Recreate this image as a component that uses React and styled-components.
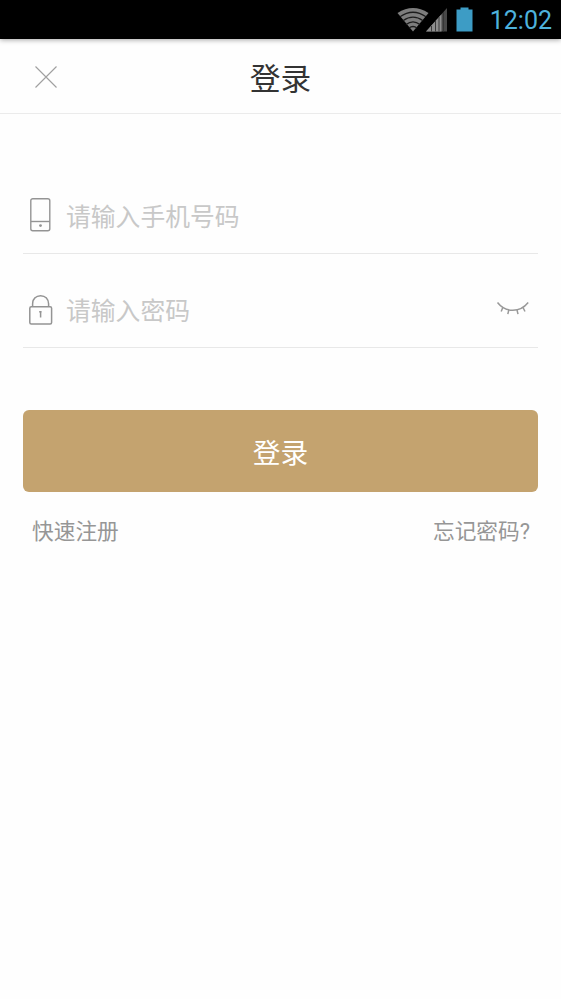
import React from "react";
import styled, { createGlobalStyle } from "styled-components";

const App = () => {
  return (
    <Page>
      <GlobalStyle />
      <StatusBar>
        <WifiIcon />
        <SignalIcon />
        <BatteryIcon />
        <Clock>12:02</Clock>
      </StatusBar>

      <Header>
        <CloseButton aria-label="关闭">
          <CloseIcon />
        </CloseButton>
        <Title>登录</Title>
      </Header>

      <Form onSubmit={(e) => e.preventDefault()}>
        <Field>
          <PhoneIcon />
          <Input type="tel" placeholder="请输入手机号码" />
        </Field>
        <Field>
          <LockIcon />
          <Input type="password" placeholder="请输入密码" />
          <EyeIcon />
        </Field>
        <Submit type="submit">登录</Submit>
        <Links>
          <TextLink>快速注册</TextLink>
          <TextLink>忘记密码?</TextLink>
        </Links>
      </Form>
    </Page>
  );
};

const WifiIcon = () => (
  <svg width="32" height="25" viewBox="0 0 32 25">
    <path d="M16 24.5 L0.5 6 Q16 -4 31.5 6 Z" fill="#7d7d7d" />
    <g fill="none" stroke="#1c1c1c" strokeWidth="1.3">
      <path d="M3 9.8 Q16 0.7 29 9.8" />
      <path d="M6 13.7 Q16 6.5 26 13.7" />
      <path d="M9 17.5 Q16 12.1 23 17.5" />
      <path d="M12 21.1 Q16 17.9 20 21.1" />
    </g>
  </svg>
);

const SignalIcon = () => (
  <Signal width="22" height="25" viewBox="0 0 22 25">
    <path d="M0 24.5 L21 1 V24.5 Z" fill="#484848" />
    <path d="M0 24.5 L15.5 7.2 V24.5 Z" fill="#8e8e8e" />
    <path d="M5.5 19V24.5M9.5 14V24.5M13 10V24.5M17.5 5V24.5" stroke="#333" strokeWidth="0.9" />
  </Signal>
);

const BatteryIcon = () => (
  <Battery width="17" height="25" viewBox="0 0 17 25">
    <path d="M0.5 2.5H4.5V0.5H12.5V2.5H16.5V24.5H0.5Z" fill="#3d9cc5" />
  </Battery>
);

const CloseIcon = () => (
  <svg width="22" height="22" viewBox="0 0 22 22">
    <path d="M0.5 0.5L21.5 21.5M21.5 0.5L0.5 21.5" stroke="#a0a0a0" strokeWidth="1.1" />
  </svg>
);

const PhoneIcon = () => (
  <svg width="24" height="36" viewBox="0 0 24 36" fill="none" stroke="#949494" strokeWidth="1.4">
    <rect x="1.8" y="1.7" width="19" height="32" rx="2" />
    <path d="M2 24.5H21" />
    <circle cx="11.5" cy="28.6" r="1.4" fill="#949494" stroke="none" />
  </svg>
);

const LockIcon = () => (
  <svg width="24" height="36" viewBox="0 0 24 36" fill="none" stroke="#949494" strokeWidth="1.5">
    <rect x="0.8" y="15.7" width="21.8" height="17.4" rx="1.5" />
    <path d="M3.6 15.3V12.8C3.6 8.2 6.8 4.7 11.6 4.7S19.6 8.2 19.6 12.8V15.3" />
    <path d="M11.6 20V26.5" />
    <path d="M10.2 20.8H12.4" />
  </svg>
);

const EyeIcon = () => (
  <Eye width="34" height="16" viewBox="0 0 34 16" fill="none" stroke="#999" strokeWidth="1.5">
    <path d="M1.5 2.5C9.5 12.8 24 12.8 32.2 2.5" />
    <path d="M6.8 7.5L5.2 11.5M12.8 10L11.8 14.2M21 10L22 14.2M27 7.5L29 11.5" />
  </Eye>
);

const GlobalStyle = createGlobalStyle`
  * {
    box-sizing: border-box;
  }

  body {
    margin: 0;
    background: #fefefe;
    font-family: Roboto, "Noto Sans CJK SC", sans-serif;
  }

  button {
    padding: 0;
    border: none;
    background: transparent;
    font-family: inherit;
    cursor: pointer;
  }
`;

const Page = styled.div`
  height: 999px;
  overflow: hidden;
`;

const StatusBar = styled.div`
  display: flex;
  align-items: center;
  justify-content: flex-end;
  height: 39px;
  padding-right: 9px;
  background: #000;
  box-shadow: 0 1px 5px rgba(0, 0, 0, 0.35);
`;

const Signal = styled.svg`
  margin-left: -3px;
`;

const Battery = styled.svg`
  margin-left: 8px;
`;

const Clock = styled.span`
  width: 63px;
  margin-left: 16px;
  padding-top: 2px;
  color: #4eb2dc;
  font-size: 25px;
  line-height: 30px;
  text-align: right;
  white-space: nowrap;
`;

const Header = styled.header`
  display: grid;
  grid-template-columns: 91px 1fr 91px;
  align-items: center;
  height: 75px;
  padding-top: 2px;
  border-bottom: 1px solid #ebebeb;
`;

const CloseButton = styled.button`
  height: 22px;
  line-height: 0;
`;

const Title = styled.h1`
  margin: 0;
  padding-top: 6px;
  color: #333;
  font-size: 30.7px;
  font-weight: 400;
  line-height: 40px;
  text-align: center;
`;

const Form = styled.form`
  padding: 46px 23px 0;
`;

const Field = styled.div`
  display: flex;
  align-items: center;
  height: 94px;
  padding: 16px 8px 0 6px;
  border-bottom: 1px solid #e8e8e8;
`;

const Input = styled.input`
  flex: 1;
  min-width: 0;
  height: 40px;
  margin-left: 13px;
  padding: 6px 0 0;
  border: none;
  outline: none;
  background: transparent;
  font-family: inherit;
  font-size: 24.8px;

  &::placeholder {
    color: #c8c8c8;
    opacity: 1;
  }
`;

const Eye = styled.svg`
  margin-top: -1px;
`;

const Submit = styled.button`
  display: block;
  width: 100%;
  height: 82px;
  margin-top: 62.4px;
  padding-bottom: 1px;
  border-radius: 6px;
  background: #c4a36f !important;
  color: #fff;
  font-size: 27.7px;
`;

const Links = styled.div`
  display: flex;
  justify-content: space-between;
  padding: 24px 8px 0 9px;
`;

const TextLink = styled.button`
  color: #969696;
  font-size: 21.7px;
  line-height: 32px;
`;

export default App;
